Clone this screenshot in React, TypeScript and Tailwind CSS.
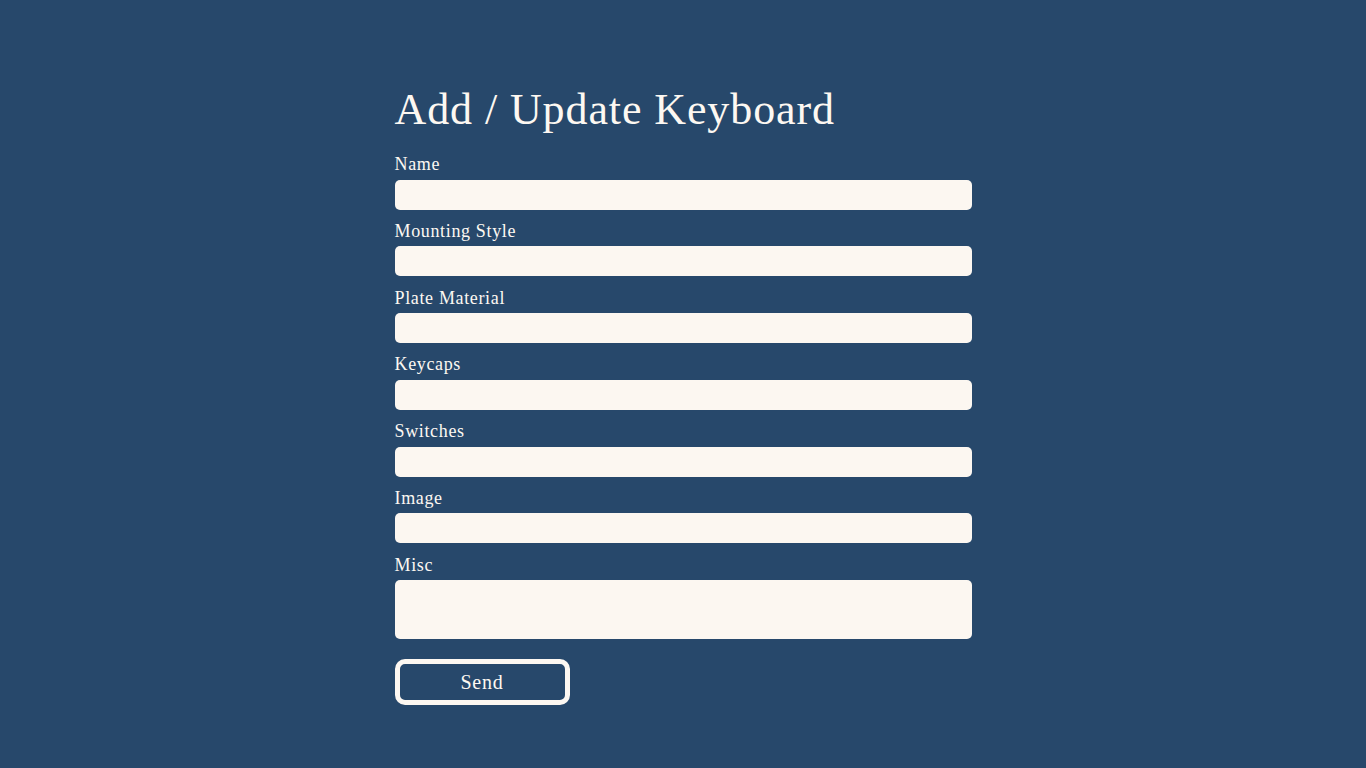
const fields = ["Name", "Mounting Style", "Plate Material", "Keycaps", "Switches", "Image"];

export default function App() {
  return (
    <div
      className="flex min-h-screen justify-center bg-[#27486b] text-[#fdf8f2]"
      style={{ fontFamily: '"Liberation Serif", serif' }}
    >
      <form className="mt-[82px] flex w-[577px] flex-col">
        <h1 className="mb-[13px] text-[44px] leading-[56px] tracking-[0.9px]">Add / Update Keyboard</h1>
        {fields.map((f) => (
          <div key={f} className="mb-[8.25px] flex flex-col">
            <label className="mb-[1.5px] text-[18px] leading-[27px] tracking-[0.65px]">{f}</label>
            <input className="h-[30px] rounded-[5px] bg-[#fcf7f1] px-2 text-black outline-none" />
          </div>
        ))}
        <div className="flex flex-col">
          <label className="mb-[1.5px] text-[18px] leading-[27px] tracking-[0.65px]">Misc</label>
          <textarea className="h-[59px] resize-none rounded-[5px] bg-[#fcf7f1] px-2 text-black outline-none" />
        </div>
        <button
          type="button"
          className="mt-[20px] h-[46px] w-[175px] rounded-[10px] border-[5px] border-[#fdf8f2] text-[20px] tracking-[0.75px]"
        >
          Send
        </button>
      </form>
    </div>
  );
}
